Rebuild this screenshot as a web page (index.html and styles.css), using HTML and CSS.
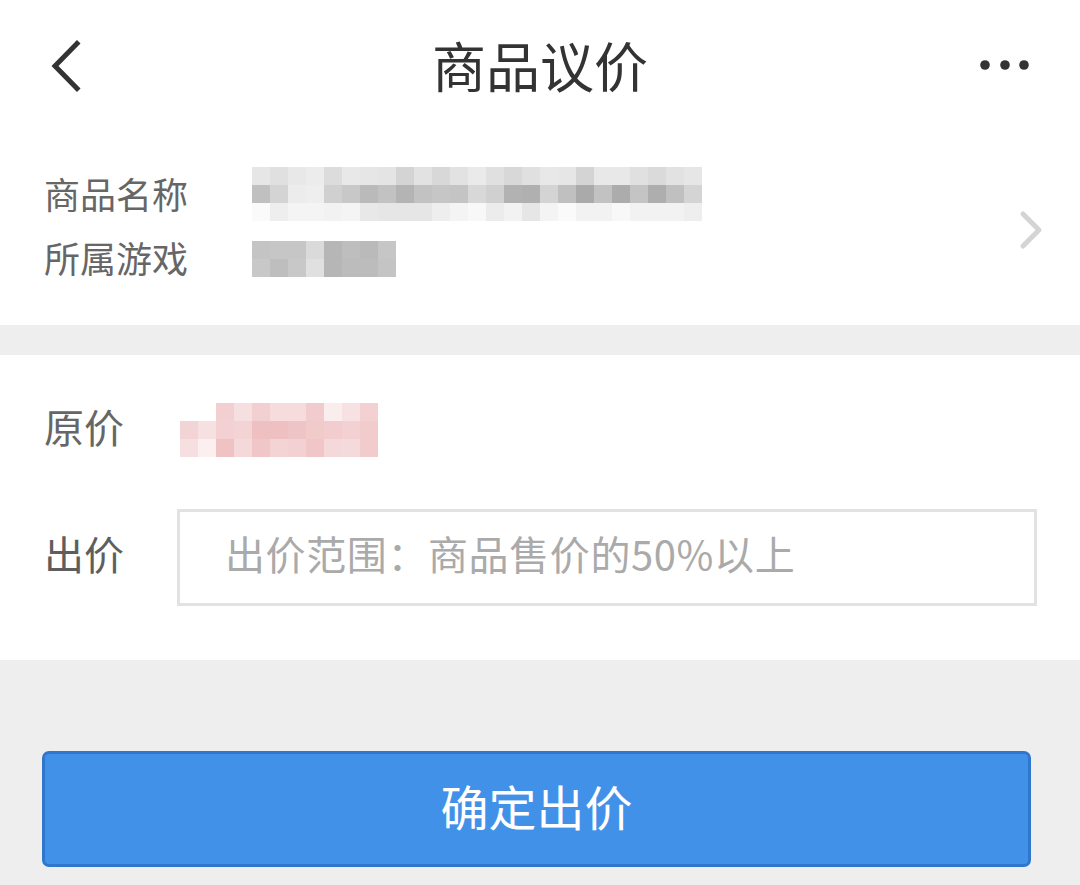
FILE: index.html
```html
<!DOCTYPE html>
<html lang="zh-CN">
<head>
<meta charset="utf-8">
<title>商品议价</title>
<link rel="stylesheet" href="styles.css">
</head>
<body>
<div class="page">
  <header class="topbar">
    <div class="topbar-left">
      <svg class="back" width="60" height="60" viewBox="0 0 60 60" aria-hidden="true">
        <polyline points="37,5.5 15,28 37,50.5" fill="none" stroke="#333" stroke-width="5" stroke-linecap="square" stroke-linejoin="miter"/>
      </svg>
    </div>
    <h1 class="title">商品议价</h1>
    <div class="topbar-right">
      <svg class="more" width="56" height="20" viewBox="0 0 56 20" aria-hidden="true">
        <circle cx="8" cy="7" r="4.8" fill="#333"/>
        <circle cx="28" cy="7" r="4.8" fill="#333"/>
        <circle cx="47" cy="7" r="4.8" fill="#333"/>
      </svg>
    </div>
  </header>

  <section class="info">
    <div class="info-rows">
      <div class="info-row">
        <span class="info-label">商品名称</span>
        <div class="mosaic mosaic-name">
          <div class="mrow n1"></div>
          <div class="mrow n2"></div>
          <div class="mrow n3"></div>
        </div>
      </div>
      <div class="info-row">
        <span class="info-label">所属游戏</span>
        <div class="mosaic mosaic-game">
          <div class="mrow g1"></div>
          <div class="mrow g2"></div>
        </div>
      </div>
    </div>
    <svg class="chev" width="30" height="44" viewBox="0 0 30 44" aria-hidden="true">
      <polyline points="7,6 23,22 7,38" fill="none" stroke="#d4d4d4" stroke-width="5" stroke-linecap="round" stroke-linejoin="round"/>
    </svg>
  </section>

  <div class="gap"></div>

  <section class="price">
    <div class="price-row">
      <span class="price-label">原价</span>
      <div class="mosaic mosaic-price">
        <div class="mrow p1"></div>
        <div class="mrow p2"></div>
        <div class="mrow p3"></div>
      </div>
    </div>
    <div class="offer-row">
      <span class="price-label offer-label">出价</span>
      <input class="offer-input" type="text" placeholder="出价范围：商品售价的50%以上">
    </div>
  </section>

  <footer class="actions">
    <button class="confirm" type="button">确定出价</button>
  </footer>
</div>
</body>
</html>
```

FILE: styles.css
```css
* {
  box-sizing: border-box;
}

html, body {
  margin: 0;
  padding: 0;
}

body {
  background: #eeeeee;
  font-family: "Noto Sans CJK SC", "Noto Sans", sans-serif;
  width: 1080px;
  height: 885px;
  overflow: hidden;
}

.page {
  width: 1080px;
}

/* Top bar */
.topbar {
  height: 136px;
  background: #ffffff;
  display: grid;
  grid-template-columns: 1fr auto 1fr;
  align-items: center;
}

.topbar-left {
  display: flex;
  align-items: center;
  padding-left: 40px;
}

.back {
  display: block;
}

.title {
  margin: 0 0 7px;
  font-size: 54px;
  font-weight: 400;
  color: #333333;
  line-height: 1;
  letter-spacing: 0;
}

.topbar-right {
  display: flex;
  justify-content: flex-end;
  padding-right: 47px;
}

.more {
  display: block;
}

/* Product info */
.info {
  background: #ffffff;
  display: flex;
  align-items: center;
  padding: 28px 34px 33px 44px;
}

.info-rows {
  flex: 1;
}

.info-row {
  display: flex;
  align-items: center;
  height: 64px;
}

.info-label {
  width: 208px;
  font-size: 36px;
  line-height: 1;
  color: #666666;
  margin-bottom: 6px;
}

.chev {
  display: block;
  margin-top: 4px;
}

.mosaic {
  display: flex;
  flex-direction: column;
}

.mrow {
  height: 18px;
}

.mosaic-name {
  width: 450px;
  margin-top: -4px;
}

.mosaic-game {
  width: 144px;
  margin-top: -2px;
}

.n1 {
  background: linear-gradient(to right,
    #e6e6e6 0 18px, #e0e0e0 18px 36px, #e8e8e8 36px 54px, #ececec 54px 72px,
    #dcdcdc 72px 90px, #e8e8e8 90px 108px, #e6e6e6 108px 126px, #e4e4e4 126px 144px,
    #d4d4d4 144px 162px, #e2e2e2 162px 180px, #d8d8d8 180px 198px, #e2e2e2 198px 216px,
    #eaeaea 216px 234px, #e0e0e0 234px 252px, #d8d8d8 252px 270px, #e0e0e0 270px 288px,
    #e8e8e8 288px 306px, #e6e6e6 306px 324px, #d4d4d4 324px 342px, #e8e8e8 342px 360px,
    #e8e8e8 360px 378px, #e0e0e0 378px 396px, #dadada 396px 414px, #e2e2e2 414px 432px,
    #e6e6e6 432px 450px);
}

.n2 {
  background: linear-gradient(to right,
    #c0c0c0 0 18px, #d4d4d4 18px 36px, #ececec 36px 54px, #eeeeee 54px 72px,
    #d0d0d0 72px 90px, #c8c8c8 90px 108px, #bababa 108px 126px, #c2c2c2 126px 144px,
    #b4b4b4 144px 162px, #c2c2c2 162px 180px, #c6c6c6 180px 198px, #c4c4c4 198px 216px,
    #d8d8d8 216px 234px, #d0d0d0 234px 252px, #b2b2b2 252px 270px, #b0b0b0 270px 288px,
    #d4d4d4 288px 306px, #c0c0c0 306px 324px, #aaaaaa 324px 342px, #c2c2c2 342px 360px,
    #acacac 360px 378px, #c4c4c4 378px 396px, #aeaeae 396px 414px, #c0c0c0 414px 432px,
    #d4d4d4 432px 450px);
}

.n3 {
  background: linear-gradient(to right,
    #fafafa 0 18px, #eeeeee 18px 36px, #f4f4f4 36px 54px, #f4f4f4 54px 72px,
    #f2f2f2 72px 90px, #f4f4f4 90px 108px, #e8e8e8 108px 126px, #e6e6e6 126px 144px,
    #e6e6e6 144px 162px, #e6e6e6 162px 180px, #eeeeee 180px 198px, #f4f4f4 198px 216px,
    #f8f8f8 216px 234px, #ececec 234px 252px, #f2f2f2 252px 270px, #e6e6e6 270px 288px,
    #f4f4f4 288px 306px, #fafafa 306px 324px, #f2f2f2 324px 342px, #f2f2f2 342px 360px,
    #f8f8f8 360px 378px, #f2f2f2 378px 396px, #f2f2f2 396px 414px, #f2f2f2 414px 432px,
    #eeeeee 432px 450px);
}

.g1 {
  background: linear-gradient(to right,
    #c4c4c4 0 18px, #c6c6c6 18px 36px, #c6c6c6 36px 54px, #dadada 54px 72px,
    #b6b6b6 72px 90px, #bebebe 90px 108px, #bababa 108px 126px, #c6c6c6 126px 144px);
}

.g2 {
  background: linear-gradient(to right,
    #c8c8c8 0 18px, #bebebe 18px 36px, #c8c8c8 36px 54px, #e0e0e0 54px 72px,
    #b6b6b6 72px 90px, #bcbcbc 90px 108px, #bcbcbc 108px 126px, #c4c4c4 126px 144px);
}

/* Gap */
.gap {
  height: 30px;
  background: #eeeeee;
}

/* Price section */
.price {
  background: #ffffff;
  padding: 48px 43px 54px 44px;
}

.price-row {
  display: flex;
  align-items: center;
  height: 54px;
}

.price-label {
  width: 136px;
  font-size: 40px;
  line-height: 1;
  color: #666666;
  margin-bottom: 8px;
}

.mosaic-price {
  width: 198px;
}

.p1 {
  background: linear-gradient(to right,
    #ffffff 0 36px, #f2cfd1 36px 54px, #f6dfe0 54px 72px, #f2cfd1 72px 90px,
    #f6dcdd 90px 108px, #f6dcdd 108px 126px, #f1cbcd 126px 144px, #faeded 144px 162px,
    #f7e1e2 162px 180px, #f3d1d3 180px 198px);
}

.p2 {
  background: linear-gradient(to right,
    #f3d4d6 0 18px, #f6e0e1 18px 36px, #f3d1d3 36px 54px, #f3d3d4 54px 72px,
    #eec0c2 72px 90px, #eec0c2 90px 108px, #efc4c6 108px 126px, #f1caca 126px 144px,
    #f2ccce 144px 162px, #f3d1d3 162px 180px, #f2cccd 180px 198px);
}

.p3 {
  background: linear-gradient(to right,
    #f6dfe0 0 18px, #fbefef 18px 36px, #efc2c4 36px 54px, #f5d9da 54px 72px,
    #f0c6c8 72px 90px, #f3d3d4 90px 108px, #f3d1d3 108px 126px, #f0c6c8 126px 144px,
    #f5d9da 144px 162px, #f5dadb 162px 180px, #f2cccd 180px 198px);
}

.offer-row {
  display: flex;
  align-items: center;
  margin-top: 52px;
}

.offer-label {
  width: 133px;
  color: #5e5e5e;
  margin-bottom: 10px;
}

.offer-input {
  flex: 1;
  height: 97px;
  border: 3px solid #e2e2e2;
  border-radius: 0;
  background: #ffffff;
  padding: 0 0 10px 45px;
  font-family: "Noto Sans CJK SC", "Noto Sans", sans-serif;
  font-size: 40px;
  letter-spacing: 0.6px;
  color: #333333;
  outline: none;
}

.offer-input::placeholder {
  color: #aaaaaa;
  opacity: 1;
}

/* Actions */
.actions {
  height: 225px;
  background: #eeeeee;
  padding: 91px 49px 0 42px;
}

.confirm {
  display: block;
  width: 989px;
  height: 116px;
  border: 3px solid #2f77cc;
  border-radius: 7px;
  background: #4291e9;
  color: #ffffff;
  font-family: "Noto Sans CJK SC", "Noto Sans", sans-serif;
  font-size: 48px;
  line-height: 1;
  padding: 0 0 8px;
  cursor: pointer;
}
```
